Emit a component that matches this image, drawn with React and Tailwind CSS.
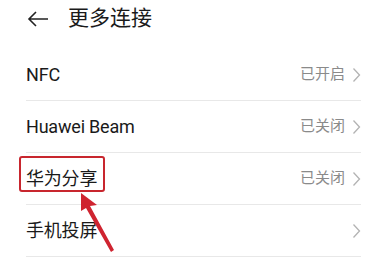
const rows = [
  { label: 'NFC', status: '已开启' },
  { label: 'Huawei Beam', status: '已关闭' },
  { label: '华为分享', status: '已关闭', marked: true },
  { label: '手机投屏', status: '' },
];

const Chevron = () => (
  <svg width="9" height="16" viewBox="0 0 9 16" className="shrink-0">
    <path d="M1.5 1.5 L7.5 8 L1.5 14.5" fill="none" stroke="#b3b3b3" strokeWidth="1.3" />
  </svg>
);

const SettingRow = ({ label, status, marked }) => (
  <div className="relative flex h-[52px] items-center justify-between border-b border-[#e8e8e8]">
    <span className="text-[18px] text-[#1a1a1a] tracking-[-0.2px]">{label}</span>
    <div className="flex items-center gap-[7px]">
      {status && <span className="text-[15px] text-[#8a8a8a]">{status}</span>}
      <Chevron />
    </div>
    {/* red annotation box */}
    {marked && (
      <div className="absolute left-[-7px] top-[3px] h-[36px] w-[86px] rounded-[3px] border-2 border-[#c8262e]" />
    )}
  </div>
);

export default function App() {
  return (
    <div
      className="relative h-[272px] w-[383px] overflow-hidden bg-white"
      style={{ fontFamily: 'Roboto, "Noto Sans CJK SC", sans-serif' }}
    >
      {/* Header */}
      <div className="flex h-[38px] items-center pl-[27px]">
        <svg width="22" height="18" viewBox="0 0 22 18">
          <path d="M21 9 H2 M9 2 L2 9 L9 16" fill="none" stroke="#222" strokeWidth="1.6" />
        </svg>
        <h1 className="ml-[19px] text-[21px] font-normal text-[#1a1a1a]">更多连接</h1>
      </div>

      {/* List */}
      <div className="mt-[11px] ml-[26px] mr-[22px]">
        {rows.map((r) => (
          <SettingRow key={r.label} {...r} />
        ))}
      </div>

      {/* red annotation arrow */}
      <svg className="absolute left-0 top-0" width="383" height="272" viewBox="0 0 383 272">
        <path
          d="M81 193 L97 205 L90 206 L114 250 L111 252 L86 208 L81 211 Z"
          fill="#cf2430"
        />
      </svg>
    </div>
  );
}
